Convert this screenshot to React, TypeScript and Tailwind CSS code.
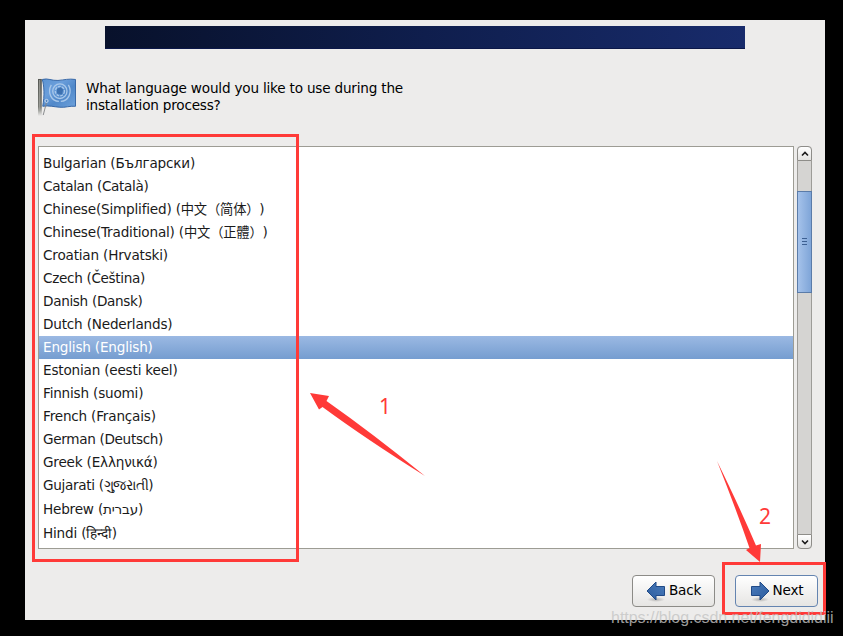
import React from 'react';

const languages = [
  { name: 'Bulgarian', native: 'Български' },
  { name: 'Catalan', native: 'Català', tight: true },
  { name: 'Chinese(Simplified)', native: '中文（简体）', cjk: true },
  { name: 'Chinese(Traditional)', native: '中文（正體）', cjk: true },
  { name: 'Croatian', native: 'Hrvatski' },
  { name: 'Czech', native: 'Čeština', tight: true },
  { name: 'Danish', native: 'Dansk', tight: true },
  { name: 'Dutch', native: 'Nederlands' },
  { name: 'English', native: 'English', selected: true },
  { name: 'Estonian', native: 'eesti keel' },
  { name: 'Finnish', native: 'suomi' },
  { name: 'French', native: 'Français' },
  { name: 'German', native: 'Deutsch', tight: true },
  { name: 'Greek', native: 'Ελληνικά' },
  { name: 'Gujarati', native: 'ગુજરાતી', tight: true },
  { name: 'Hebrew', native: 'עברית', tall: true },
  { name: 'Hindi', native: 'हिन्दी', tall: true },
];

const FlagIcon: React.FC = () => (
  <svg width="38" height="39" viewBox="0 0 40 40" preserveAspectRatio="none" className="shrink-0">
    <defs>
      <linearGradient id="cloth" x1="0" y1="0" x2="1" y2="1">
        <stop offset="0" stopColor="#5d94d2" />
        <stop offset="0.35" stopColor="#6a9edb" />
        <stop offset="0.6" stopColor="#5088c9" />
        <stop offset="1" stopColor="#6ea2dc" />
      </linearGradient>
      <linearGradient id="pole" x1="0" y1="0" x2="0" y2="1">
        <stop offset="0" stopColor="#555753" />
        <stop offset="0.75" stopColor="#777974" />
        <stop offset="1" stopColor="#777974" stopOpacity="0" />
      </linearGradient>
    </defs>
    <path d="M4.500 1.500C10 -.2 15 3 21 2.500C28 2 32 0.500 39.500 1.500V29C33 28.500 29 30.500 23 30C16 29.500 12 28 5 29C7 18 6.500 8 4.500 1.500Z" fill="url(#cloth)" stroke="#3465a4" />
    <g fill="none" stroke="#a9c8ea" strokeWidth="1.400">
      <circle cx="23" cy="13.500" r="7.500" />
      <circle cx="23" cy="13.500" r="4.800" strokeDasharray="3 1" />
      <path d="M14 7C9.500 15 14 23.500 22 24M32 7C36.500 15 32 23.500 24 24" />
    </g>
    <path d="M20 11L24 9.500L26.500 12L25 17L20 16Z" fill="#3d71b0" />
    <rect x="0" y="1" width="4" height="38" fill="url(#pole)" />
    <path d="M1.800 2V34" stroke="#a3a5a0" />
    <path d="M9 25L5.500 38" stroke="#85878a" fill="none" />
    <circle cx="9" cy="23.500" r="1.600" fill="#4c80bd" stroke="#dce7f3" strokeWidth="0.900" />
  </svg>
);

const ArrowIcon: React.FC<{ flip?: boolean }> = ({ flip }) => (
  <svg width="20" height="22" viewBox="0 0 20 22" className={flip ? 'shrink-0 -scale-x-100' : 'shrink-0'}>
    <defs>
      <radialGradient id="arrowShadow">
        <stop offset="0" stopColor="#000" stopOpacity="0.250" />
        <stop offset="1" stopColor="#000" stopOpacity="0" />
      </radialGradient>
      <linearGradient id="arrowFill" x1="0" y1="0" x2="1" y2="1">
        <stop offset="0" stopColor="#4a7cbc" />
        <stop offset="1" stopColor="#2b5b9d" />
      </linearGradient>
    </defs>
    <ellipse cx="10" cy="19.500" rx="9" ry="2.500" fill="url(#arrowShadow)" />
    <path d="M1.500 6.500H10V2L19 11L10 20V15.500H1.500Z" fill="url(#arrowFill)" stroke="#204a87" />
  </svg>
);

const Chevron: React.FC<{ down?: boolean }> = ({ down }) => (
  <svg width="8" height="6" viewBox="0 0 8 6" className={down ? 'rotate-180' : ''}>
    <path d="M1 4.500L4 1.500L7 4.500" fill="none" stroke="#1a1a1a" strokeWidth="1.600" />
  </svg>
);

const Scrollbar: React.FC = () => (
  <div className="flex h-[403px] w-[15px] flex-col rounded bg-[#d5d4d2]">
    <div className="flex h-[15px] items-center justify-center rounded-t border border-[#8e8d89] bg-linear-to-b from-white to-[#e4e3e1]">
      <Chevron />
    </div>
    <div className="h-[30px] border-x border-[#9d9c98]" />
    <div className="flex h-[102px] flex-col items-center justify-center gap-[2px] border border-[#5a7ba8] bg-linear-to-r from-[#a5c2ea] to-[#7fa5d8] pb-px">
      <div className="h-px w-[5px] bg-[#3c5f92]" />
      <div className="h-px w-[5px] bg-[#3c5f92]" />
      <div className="h-px w-[5px] bg-[#3c5f92]" />
    </div>
    <div className="flex-1 border-x border-[#9d9c98]" />
    <div className="flex h-[15px] items-center justify-center rounded-b border border-[#8e8d89] bg-linear-to-b from-white to-[#e4e3e1]">
      <Chevron down />
    </div>
  </div>
);

export default function App() {
  return (
    <div className="relative h-[636px] w-[843px] overflow-hidden bg-black pt-5 pl-[25px] font-['DejaVu_Sans','Noto_Sans_CJK_SC',sans-serif] text-[13.600px] tracking-[-0.200px] text-black">
      <main className="h-[600px] w-[800px] bg-[#edeceb] pt-1.5">
        <div className="mx-auto h-[23px] w-[640px] border-b border-[#0b1748] bg-linear-to-r from-[#08112b] via-[#0f1e4d] to-[#182b6b]" />
        <div className="flex h-[97px] items-start gap-2.5 pt-[29px] pl-[13px]">
          <FlagIcon />
          <p className="pt-0.5 leading-[17px]">
            What language would you like to use during the
            <br />
            installation process?
          </p>
        </div>
        <div className="flex gap-[3px] pl-[13px]">
          <ul className="h-[403px] w-[756px] border border-[#9d9c94] bg-white pt-[5px]">
            {languages.map((lang) => (
              <li
                key={lang.name}
                className={`pl-1 leading-[22px] whitespace-nowrap ${lang.tall ? 'h-6 pt-px' : 'h-[23px]'} ${
                  lang.selected ? 'bg-linear-to-b from-[#9bb9e3] to-[#759dd0] text-white' : 'text-[#1a1a1a]'
                } ${lang.tight ? 'tracking-[-0.330px]' : ''}`}
              >
                {lang.name} (
                <span className={lang.cjk ? 'text-[13.300px] leading-none [text-spacing-trim:space-all]' : ''}>{lang.native}</span>)
              </li>
            ))}
          </ul>
          <Scrollbar />
        </div>
        <div className="flex justify-end gap-5 pt-[26px] pr-[7px]">
          <button className="flex h-8 w-[83px] items-center justify-center rounded border border-[#8c8b87] bg-linear-to-b from-white to-[#e6e5e3]">
            <ArrowIcon flip />
            <span className="ml-[3px] pb-0.5">Back</span>
          </button>
          <button className="flex h-8 w-[83px] items-center justify-center rounded border border-[#6484b0] bg-linear-to-b from-white to-[#e6e5e3]">
            <ArrowIcon />
            <span className="ml-[3px] pb-0.5">Next</span>
          </button>
        </div>
      </main>

      <div className="absolute top-[134px] left-[32px] h-[428px] w-[267px] border-3 border-[#ff3a38]" />
      <div className="absolute top-[562px] left-[722px] h-[53px] w-[104px] border-3 border-[#ff3a38]" />
      <svg className="absolute inset-0" width="843" height="636">
        <path d="M310 393L329 396L326.500 401Q372 433 425 476Q366 439 322.500 407L319 409.500Z" fill="#ff3a38" />
        <path d="M717 461Q740 508 756 545.500L761 544L760 562L746 550L749.500 548Q736 509 717 461Z" fill="#ff3a38" />
      </svg>
      <span className="absolute top-[394px] left-[379px] font-['Noto_Sans',sans-serif] text-[21px] leading-6 tracking-normal text-[#ff3a38]">1</span>
      <span className="absolute top-[504px] left-[759px] font-['Noto_Sans',sans-serif] text-[21px] leading-6 tracking-normal text-[#ff3a38]">2</span>
      <span className="absolute top-[608px] left-[611px] font-['Liberation_Sans',sans-serif] text-[16px] leading-5 tracking-[-0.020px] whitespace-nowrap text-[#c4c4c4]/80">
        https://blog.csdn.net/fengdididiii
      </span>
    </div>
  );
}
